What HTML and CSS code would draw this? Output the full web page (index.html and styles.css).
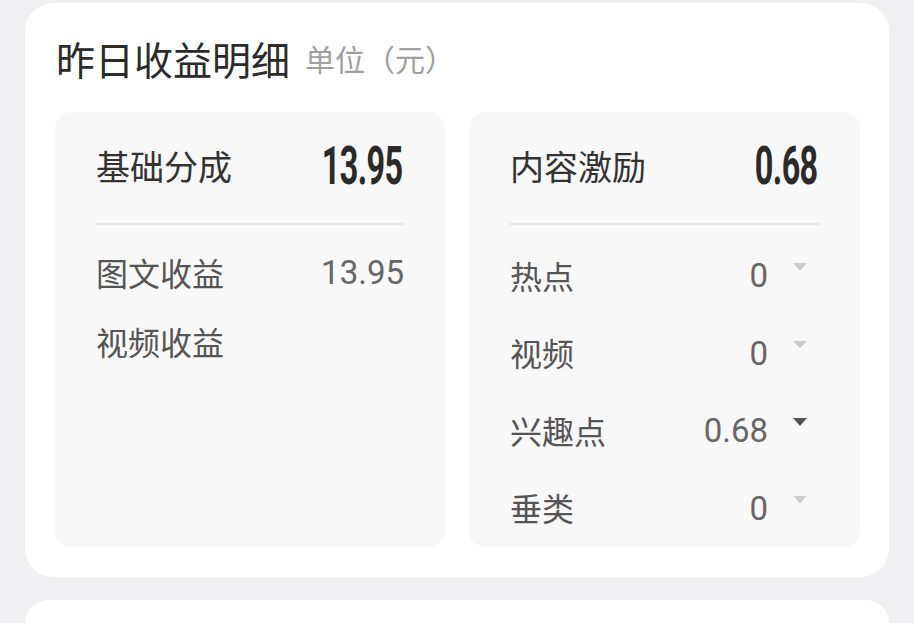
FILE: index.html
```html
<!DOCTYPE html>
<html lang="zh">
<head>
<meta charset="utf-8">
<link rel="stylesheet" href="styles.css">
</head>
<body>
  <section class="card">
    <h2 class="title">昨日收益明细<span class="unit">单位（元）</span></h2>
    <div class="grid">
      <div class="box">
        <div class="head">
          <span class="head-label">基础分成</span>
          <span class="big"><span class="big-inner">13.95</span></span>
        </div>
        <ul class="rows rows-left">
          <li class="row"><span class="label">图文收益</span><span class="val">13.95</span></li>
          <li class="row"><span class="label">视频收益</span><span class="val"></span></li>
        </ul>
      </div>
      <div class="box">
        <div class="head">
          <span class="head-label">内容激励</span>
          <span class="big"><span class="big-inner">0.68</span></span>
        </div>
        <ul class="rows rows-right">
          <li class="row"><span class="label">热点</span><span class="val">0</span><span class="arrow"></span></li>
          <li class="row"><span class="label">视频</span><span class="val">0</span><span class="arrow"></span></li>
          <li class="row"><span class="label">兴趣点</span><span class="val">0.68</span><span class="arrow arrow-dark"></span></li>
          <li class="row"><span class="label">垂类</span><span class="val">0</span><span class="arrow"></span></li>
        </ul>
      </div>
    </div>
  </section>
  <section class="card card-next"></section>
</body>
</html>
```

FILE: styles.css
```css
* { box-sizing: border-box; }
html, body { margin: 0; padding: 0; }
body {
  background: #f0f0f2;
  font-family: "Roboto", "Noto Sans CJK SC", sans-serif;
  width: 914px;
  height: 623px;
  overflow: hidden;
  padding-top: 3px;
}
.card {
  margin: 0 25px;
  background: #ffffff;
  border-radius: 28px;
  padding: 30px 29px 30px 30px;
  height: 574px;
}
.card-next {
  margin-top: 23px;
  height: 23px;
  padding: 0;
  border-radius: 24px 24px 0 0;
}
.title {
  margin: 0 0 29px 0;
  height: 50px;
  line-height: 44px;
  font-size: 39px;
  font-weight: 400;
  color: #2b2b2b;
  font-family: "Noto Sans CJK SC", sans-serif;
  padding-left: 1px;
  white-space: nowrap;
  display: flex;
  align-items: center;
}
.unit {
  font-size: 30px;
  line-height: 44px;
  color: #a0a0a0;
  margin-left: 15px;
}
.grid {
  display: grid;
  grid-template-columns: 390px 391px;
  gap: 24px;
  height: 435px;
}
.box {
  background: #f8f8f8;
  border-radius: 16px;
  padding: 0 40px;
}
.head {
  height: 113px;
  padding-bottom: 4px;
  border-bottom: 2px solid #e9e9e9;
  display: flex;
  align-items: center;
  justify-content: space-between;
}
.head-label {
  font-family: "Noto Sans CJK SC", sans-serif;
  font-size: 34px;
  color: #333;
  line-height: 40px;
  padding-left: 1px;
}
.big {
  display: inline-block;
  font-family: "Roboto", sans-serif;
  font-weight: 700;
  font-size: 54px;
  line-height: 56px;
  color: #2a2a2a;
  margin-right: 2px;
}
.big-inner {
  display: inline-block;
  transform: scaleX(0.6);
  transform-origin: right center;
  letter-spacing: -1px;
}
.rows {
  list-style: none;
  margin: 0;
  padding: 0;
}
.rows-left { padding-top: 12px; }
.rows-right { padding-top: 11px; }
.row {
  display: flex;
  align-items: center;
  color: #5a5a5a;
}
.rows-left .row { height: 69.5px; }
.rows-right .row { height: 77.5px; padding-right: 13px; }
.label {
  font-family: "Noto Sans CJK SC", sans-serif;
  font-size: 32px;
  color: #555;
  flex: 1;
  padding-left: 1px;
}
.val {
  font-family: "Roboto", sans-serif;
  font-size: 33px;
  color: #666;
  position: relative;
  top: 1px;
}
.rows-left .val { margin-right: 1px; }
.arrow {
  width: 14px;
  height: 8px;
  margin-left: 25px;
  align-self: flex-start;
  margin-top: 27px;
  background: #cbcbcb;
  clip-path: polygon(0 0, 100% 0, 50% 100%);
}
.arrow-dark { background: #555; }
```
